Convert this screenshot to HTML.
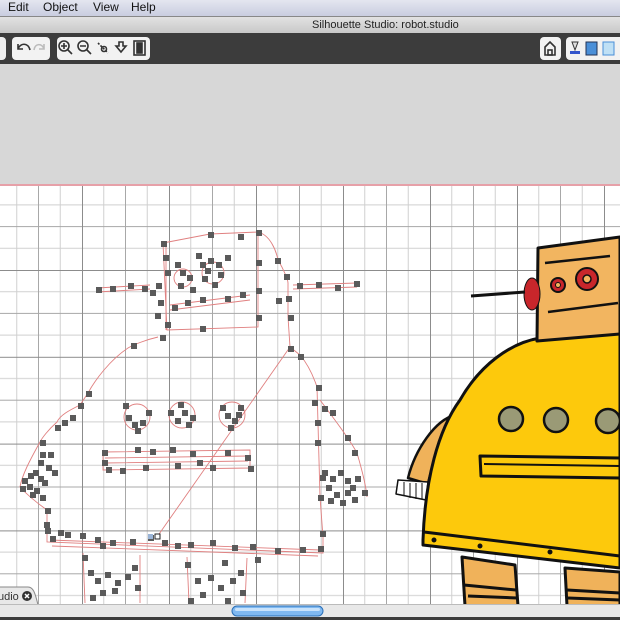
<!DOCTYPE html>
<html><head><meta charset="utf-8"><style>
html,body{margin:0;padding:0;width:620px;height:620px;overflow:hidden;background:#fff;font-family:"Liberation Sans",sans-serif}
.abs{position:absolute}
g.sq rect{width:6px;height:6px}
</style></head><body>
<div class="abs" style="left:0;top:0;width:620px;height:16px;background:linear-gradient(#e4e6f0,#c9cde0);border-bottom:1px solid #888"></div>
<div class="abs" style="left:8px;top:0;font-size:12px;line-height:15px;color:#111">Edit</div>
<div class="abs" style="left:43px;top:0;font-size:12px;line-height:15px;color:#111">Object</div>
<div class="abs" style="left:93px;top:0;font-size:12px;line-height:15px;color:#111">View</div>
<div class="abs" style="left:131px;top:0;font-size:12px;line-height:15px;color:#111">Help</div>
<div class="abs" style="left:0;top:17px;width:620px;height:16px;background:linear-gradient(#e2e2e2,#c8c8c8)"></div>
<div class="abs" style="left:312px;top:17px;font-size:11px;line-height:16px;color:#222">Silhouette Studio: robot.studio</div>
<div class="abs" style="left:0;top:33px;width:620px;height:31px;background:#3c3c3c"></div>
<div class="abs" style="left:-6px;top:37px;width:12px;height:23px;background:#eee;border-radius:4px"></div>
<div class="abs" style="left:12px;top:37px;width:38px;height:23px;background:#f2f2f2;border-radius:4px"></div>
<div class="abs" style="left:57px;top:37px;width:93px;height:23px;background:#f2f2f2;border-radius:4px"></div>
<div class="abs" style="left:540px;top:37px;width:21px;height:23px;background:#f2f2f2;border-radius:4px"></div>
<div class="abs" style="left:566px;top:37px;width:60px;height:23px;background:#f2f2f2;border-radius:4px"></div>
<svg class="abs" style="left:0;top:0" width="620" height="70">
<g fill="none" stroke="#333" stroke-width="1.6">
<path d="M18 44 v5 h5 M18 49 C20 43 28 42 30 50"/>
<path d="M44 44 v5 h-5 M44 49 C42 43 35 43 34 50" stroke="#bbb"/>
<circle cx="64" cy="46" r="5"/><path d="M68 50 l4 4 M61 46 h6 M64 43 v6"/>
<circle cx="83" cy="46" r="5"/><path d="M87 50 l4 4 M80 46 h6"/>
<path d="M98 43 l10 10" stroke-dasharray="2 1.5"/><circle cx="104" cy="49" r="2.5"/>
<path d="M116 46 l5 6 l5 -6 h-3 v-4 h-4 v4 z"/>
<rect x="134" y="41" width="11" height="14"/><rect x="137" y="43" width="5" height="10" fill="#333"/>
<path d="M545 47 l5 -5 l5 5 v8 h-10 z"/><rect x="548" y="50" width="4" height="5"/>
</g>
<path d="M572 42 l6 0 l-3 8 z" fill="#ddd" stroke="#333"/><rect x="570" y="51" width="10" height="3" fill="#35c"/>
<rect x="586" y="42" width="11" height="13" fill="#4a8fd8" stroke="#235"/>
<rect x="603" y="42" width="11" height="13" fill="#bfe0f5" stroke="#4a8fd8"/>
</svg>
<div class="abs" style="left:0;top:64px;width:620px;height:120px;background:#d7d7d7"></div>
<svg class="abs" style="left:0;top:0" width="620" height="620">
<defs>
<pattern id="g" patternUnits="userSpaceOnUse" x="-5" y="96.4" width="87" height="86.8">
<path d="M21.75 0v86.8M65.25 0v86.8M0 21.7h87M0 65.1h87" stroke="#d0d0d0" stroke-width="1" fill="none"/>
<path d="M43.5 0v86.8M0 43.4h87" stroke="#a8a8a8" stroke-width="1" fill="none"/>
<path d="M0.5 0v86.8M0 0.5h87" stroke="#8c8c8c" stroke-width="1" fill="none"/>
</pattern>
</defs>
<rect x="0" y="186" width="620" height="419" fill="#fff"/>
<rect x="0" y="186" width="620" height="419" fill="url(#g)"/>
<line x1="0" y1="185" x2="620" y2="185" stroke="#e6a0a8" stroke-width="2"/>
<g fill="none" stroke="#e08080" stroke-width="0.9">
<path d="M163 243 L210 234 L258 232 L258 327 L167 330 Z"/>
<path d="M166 245 L166 330"/>
<path d="M258 232 C270 235 276 250 278 260 C284 270 288 280 288 283 L288 317 L290 347"/>
<path d="M97 288 L150 285 M97 292 L150 289"/>
<path d="M293 285 L357 283 M293 289 L357 287"/>
<path d="M158 337 C145 340 133 345 128 348 C110 360 95 380 88 393 L80 405 C70 410 60 415 57 422 C48 430 42 438 40 442 C30 460 22 475 20 487 C30 498 40 505 47 510 L47 530 L47 542 L323 553 L323 537 L320 497 L317 387 C312 372 306 362 300 355 L290 347"/>
<path d="M50 540 L320 550 M52 546 L318 556"/>
<path d="M320 400 C335 420 350 440 357 453 C362 470 366 485 367 497"/>
<path d="M290 347 L157 537"/>
<path d="M83 553 L85 603 M140 555 L140 603 M187 557 L189 603 M247 558 L245 603"/>
<circle cx="137" cy="417" r="13"/><circle cx="182" cy="415" r="13"/><circle cx="232" cy="415" r="13"/>
<path d="M103 452 L250 450 L250 468 L103 470 Z M105 458 L248 456 M105 463 L248 461"/>
<circle cx="183" cy="278" r="9"/><circle cx="213" cy="273" r="11"/>
<path d="M170 305 L250 295 M170 310 L250 300"/>
</g>
<g fill="#5a5a5a" class="sq">
<rect x="161" y="241" width="5" height="5"/><rect x="208" y="232" width="5" height="5"/><rect x="238" y="234" width="5" height="5"/><rect x="256" y="230" width="5" height="5"/>
<rect x="163" y="255" width="5" height="5"/><rect x="165" y="270" width="5" height="5"/><rect x="156" y="283" width="5" height="5"/><rect x="150" y="290" width="5" height="5"/><rect x="158" y="300" width="5" height="5"/><rect x="155" y="313" width="5" height="5"/><rect x="165" y="322" width="5" height="5"/><rect x="160" y="335" width="5" height="5"/><rect x="200" y="326" width="5" height="5"/><rect x="256" y="315" width="5" height="5"/><rect x="256" y="288" width="5" height="5"/><rect x="256" y="260" width="5" height="5"/>
<rect x="275" y="258" width="5" height="5"/><rect x="284" y="274" width="5" height="5"/><rect x="286" y="296" width="5" height="5"/><rect x="276" y="298" width="5" height="5"/><rect x="288" y="315" width="5" height="5"/><rect x="288" y="346" width="5" height="5"/><rect x="298" y="354" width="5" height="5"/>
<rect x="96" y="287" width="5" height="5"/><rect x="110" y="286" width="5" height="5"/><rect x="128" y="283" width="5" height="5"/><rect x="142" y="286" width="5" height="5"/>
<rect x="297" y="283" width="5" height="5"/><rect x="316" y="282" width="5" height="5"/><rect x="335" y="285" width="5" height="5"/><rect x="354" y="281" width="5" height="5"/>
<rect x="175" y="262" width="5" height="5"/><rect x="180" y="270" width="5" height="5"/><rect x="187" y="275" width="5" height="5"/><rect x="178" y="283" width="5" height="5"/><rect x="190" y="287" width="5" height="5"/>
<rect x="200" y="262" width="5" height="5"/><rect x="208" y="258" width="5" height="5"/><rect x="216" y="262" width="5" height="5"/><rect x="218" y="272" width="5" height="5"/><rect x="212" y="282" width="5" height="5"/><rect x="202" y="276" width="5" height="5"/><rect x="205" y="268" width="5" height="5"/><rect x="225" y="255" width="5" height="5"/><rect x="196" y="253" width="5" height="5"/>
<rect x="172" y="305" width="5" height="5"/><rect x="185" y="300" width="5" height="5"/><rect x="200" y="297" width="5" height="5"/><rect x="225" y="296" width="5" height="5"/><rect x="240" y="292" width="5" height="5"/>
<rect x="131" y="343" width="5" height="5"/><rect x="86" y="391" width="5" height="5"/><rect x="78" y="403" width="5" height="5"/><rect x="70" y="415" width="5" height="5"/><rect x="62" y="420" width="5" height="5"/><rect x="55" y="425" width="5" height="5"/><rect x="40" y="440" width="5" height="5"/>
<rect x="22" y="478" width="5" height="5"/><rect x="28" y="473" width="5" height="5"/><rect x="33" y="470" width="5" height="5"/><rect x="38" y="476" width="5" height="5"/><rect x="20" y="486" width="5" height="5"/><rect x="27" y="484" width="5" height="5"/><rect x="34" y="488" width="5" height="5"/><rect x="42" y="480" width="5" height="5"/><rect x="30" y="492" width="5" height="5"/><rect x="40" y="495" width="5" height="5"/><rect x="46" y="465" width="5" height="5"/><rect x="38" y="460" width="5" height="5"/><rect x="48" y="452" width="5" height="5"/><rect x="40" y="452" width="5" height="5"/><rect x="52" y="470" width="5" height="5"/><rect x="45" y="508" width="5" height="5"/><rect x="44" y="522" width="5" height="5"/>
<rect x="45" y="528" width="5" height="5"/><rect x="50" y="536" width="5" height="5"/><rect x="58" y="530" width="5" height="5"/><rect x="65" y="532" width="5" height="5"/><rect x="80" y="533" width="5" height="5"/><rect x="95" y="537" width="5" height="5"/><rect x="100" y="543" width="5" height="5"/><rect x="110" y="540" width="5" height="5"/><rect x="130" y="539" width="5" height="5"/><rect x="148" y="535" width="5" height="5"/><rect x="162" y="540" width="5" height="5"/><rect x="175" y="543" width="5" height="5"/><rect x="188" y="542" width="5" height="5"/><rect x="210" y="540" width="5" height="5"/><rect x="232" y="545" width="5" height="5"/><rect x="250" y="544" width="5" height="5"/><rect x="275" y="548" width="5" height="5"/><rect x="300" y="547" width="5" height="5"/><rect x="318" y="546" width="5" height="5"/><rect x="320" y="531" width="5" height="5"/><rect x="255" y="557" width="5" height="5"/><rect x="222" y="560" width="5" height="5"/>
<rect x="318" y="495" width="5" height="5"/><rect x="320" y="475" width="5" height="5"/><rect x="315" y="440" width="5" height="5"/><rect x="315" y="420" width="5" height="5"/><rect x="312" y="400" width="5" height="5"/><rect x="316" y="385" width="5" height="5"/><rect x="322" y="406" width="5" height="5"/><rect x="330" y="410" width="5" height="5"/><rect x="345" y="435" width="5" height="5"/><rect x="352" y="450" width="5" height="5"/>
<rect x="322" y="470" width="5" height="5"/><rect x="330" y="476" width="5" height="5"/><rect x="338" y="470" width="5" height="5"/><rect x="345" y="478" width="5" height="5"/><rect x="355" y="476" width="5" height="5"/><rect x="362" y="490" width="5" height="5"/><rect x="326" y="485" width="5" height="5"/><rect x="334" y="492" width="5" height="5"/><rect x="345" y="490" width="5" height="5"/><rect x="352" y="497" width="5" height="5"/><rect x="328" y="498" width="5" height="5"/><rect x="340" y="500" width="5" height="5"/><rect x="350" y="485" width="5" height="5"/>
<rect x="123" y="403" width="5" height="5"/><rect x="126" y="415" width="5" height="5"/><rect x="132" y="422" width="5" height="5"/><rect x="140" y="420" width="5" height="5"/><rect x="146" y="410" width="5" height="5"/><rect x="135" y="428" width="5" height="5"/>
<rect x="168" y="410" width="5" height="5"/><rect x="175" y="418" width="5" height="5"/><rect x="182" y="410" width="5" height="5"/><rect x="190" y="415" width="5" height="5"/><rect x="178" y="402" width="5" height="5"/><rect x="186" y="422" width="5" height="5"/>
<rect x="220" y="405" width="5" height="5"/><rect x="225" y="413" width="5" height="5"/><rect x="232" y="418" width="5" height="5"/><rect x="238" y="405" width="5" height="5"/><rect x="228" y="425" width="5" height="5"/><rect x="236" y="412" width="5" height="5"/>
<rect x="102" y="450" width="5" height="5"/><rect x="102" y="460" width="5" height="5"/><rect x="106" y="467" width="5" height="5"/><rect x="120" y="468" width="5" height="5"/><rect x="135" y="447" width="5" height="5"/><rect x="150" y="449" width="5" height="5"/><rect x="170" y="447" width="5" height="5"/><rect x="190" y="451" width="5" height="5"/><rect x="210" y="465" width="5" height="5"/><rect x="225" y="450" width="5" height="5"/><rect x="245" y="455" width="5" height="5"/><rect x="248" y="466" width="5" height="5"/><rect x="143" y="465" width="5" height="5"/><rect x="175" y="463" width="5" height="5"/><rect x="197" y="460" width="5" height="5"/>
<rect x="82" y="555" width="5" height="5"/><rect x="88" y="570" width="5" height="5"/><rect x="95" y="578" width="5" height="5"/><rect x="105" y="572" width="5" height="5"/><rect x="115" y="580" width="5" height="5"/><rect x="125" y="574" width="5" height="5"/><rect x="132" y="565" width="5" height="5"/><rect x="100" y="590" width="5" height="5"/><rect x="112" y="588" width="5" height="5"/><rect x="90" y="595" width="5" height="5"/><rect x="135" y="585" width="5" height="5"/>
<rect x="185" y="562" width="5" height="5"/><rect x="195" y="578" width="5" height="5"/><rect x="208" y="575" width="5" height="5"/><rect x="218" y="585" width="5" height="5"/><rect x="230" y="578" width="5" height="5"/><rect x="238" y="570" width="5" height="5"/><rect x="240" y="590" width="5" height="5"/><rect x="200" y="592" width="5" height="5"/><rect x="188" y="598" width="5" height="5"/><rect x="225" y="598" width="5" height="5"/>
</g>
<rect x="148" y="534" width="5" height="5" fill="#9ab4d6"/><rect x="155" y="534" width="5" height="5" fill="#fff" stroke="#222"/>
<g stroke="#111" stroke-linejoin="round">
<path d="M462 557 L515 565 L518 606 L465 606 Z" fill="#f0b25a" stroke-width="3"/>
<path d="M565 568 L620 572 L620 606 L567 606 Z" fill="#f0b25a" stroke-width="3"/>
<path d="M464 585 L516 590 M468 596 L517 598 M567 590 L620 593 M568 598 L620 600" stroke-width="3" fill="none"/>
<path d="M455 415 C435 420 415 450 408 478 L428 484 C432 462 442 445 458 440 Z" fill="#f0b25a" stroke-width="2.5"/>
<path d="M398 480 L428 482 L426 500 L396 494 Z" fill="#fff" stroke-width="1.5"/>
<path d="M404 482 v14 M410 483 v15 M416 483 v16 M422 483 v16" stroke-width="1"/>
<path d="M423 540 C425 480 438 430 460 400 C480 365 510 343 540 338 L620 332 L620 568 L423 545 Z" fill="#fdc90c" stroke-width="3"/>
<path d="M424 532 L620 556" stroke-width="3" fill="none"/>
<circle cx="434" cy="540" r="2" fill="#111"/><circle cx="480" cy="546" r="2" fill="#111"/><circle cx="550" cy="552" r="2" fill="#111"/>
<circle cx="511" cy="419" r="12" fill="#9a9a76" stroke-width="2.5"/>
<circle cx="556" cy="420" r="12" fill="#9a9a76" stroke-width="2.5"/>
<circle cx="608" cy="421" r="12" fill="#9a9a76" stroke-width="2.5"/>
<path d="M480 456 L620 458 L620 478 L481 476 Z" fill="#fdc90c" stroke-width="3"/>
<path d="M484 464 L620 466" stroke-width="2" fill="none"/>
<path d="M538 248 L620 237 L620 334 L537 341 Z" fill="#f2b560" stroke-width="3"/>
<ellipse cx="532" cy="294" rx="8" ry="16" fill="#c8262b" stroke-width="1"/>
<path d="M471 296 L525 292" stroke-width="3" fill="none"/>
<circle cx="558" cy="285" r="7" fill="#c8262b" stroke-width="2"/><circle cx="558" cy="285" r="2.5" fill="#f2b560" stroke-width="1"/>
<circle cx="587" cy="279" r="11" fill="#c8262b" stroke-width="2"/><circle cx="587" cy="279" r="4" fill="#f2b560" stroke-width="1.5"/>
<path d="M548 312 L618 303 M545 263 L610 256" stroke-width="2.5" fill="none"/>
</g>
<path d="M-2 587 L28 587 C33 587 35 592 38 605 L-2 605 Z" fill="#e8e8e8" stroke="#888"/>
<text x="-2" y="600" font-family="Liberation Sans, sans-serif" font-size="11" fill="#333">udio</text>
<circle cx="27" cy="596" r="5" fill="#333"/><path d="M25 594 l4 4 M29 594 l-4 4" stroke="#fff" stroke-width="1.5"/>
<rect x="0" y="605" width="620" height="12" fill="#e8e8e8"/>
<rect x="0" y="604" width="620" height="1" fill="#bbb"/>
<rect x="232" y="606" width="91" height="10" rx="5" fill="#7fb8f0" stroke="#2a6fb8"/>
<rect x="235" y="608" width="85" height="3" rx="1.5" fill="#c8e2fb"/>
<rect x="0" y="617" width="620" height="3" fill="#3c3c3c"/>
</svg>
</body></html>
